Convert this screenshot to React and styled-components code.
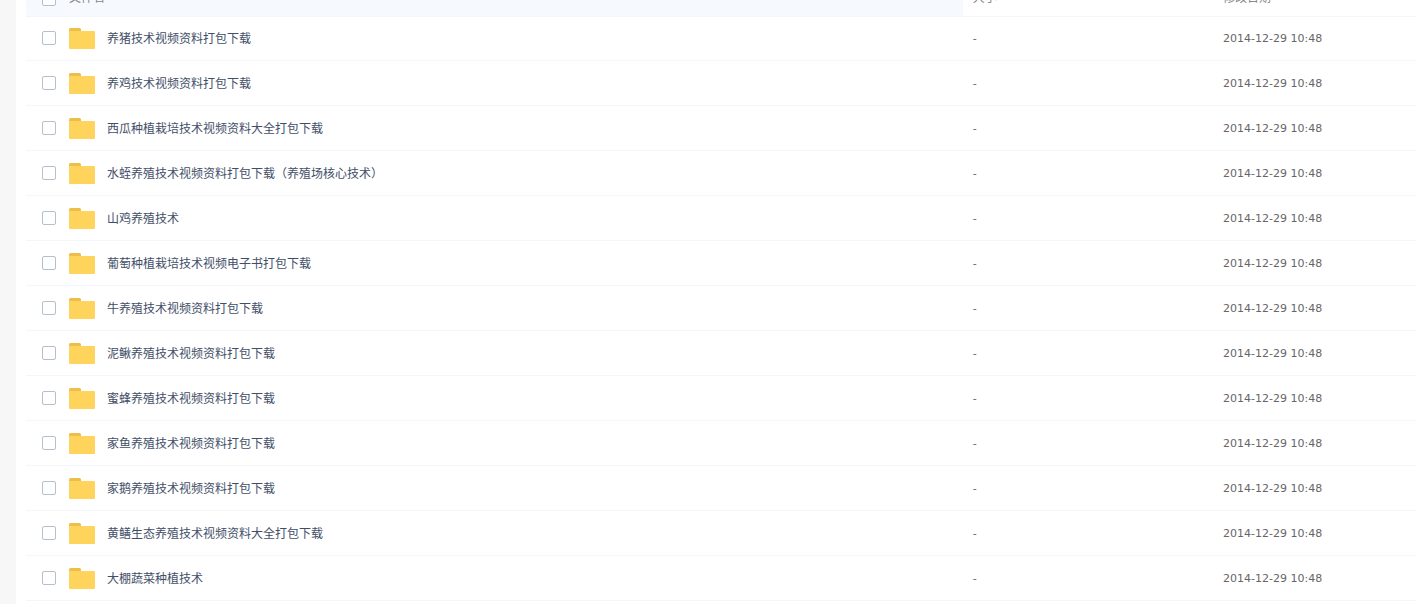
import React from "react";
import styled, { createGlobalStyle } from "styled-components";

const GlobalStyle = createGlobalStyle`
  * {
    box-sizing: border-box;
  }
  body {
    margin: 0;
    overflow: hidden;
    background: #f7f7f7;
    font-family: "Noto Sans CJK SC", sans-serif;
    font-size: 12px;
  }
`;

const Page = styled.main`
  min-height: 100vh;
  margin-left: 16px;
  padding-left: 10px;
  overflow: hidden;
  background: #fff;
`;

// the list is scrolled a little, so the head is partly out of view
const FileTable = styled.table`
  width: 100%;
  margin-top: -18px;
  table-layout: fixed;
  border-collapse: separate;
  border-spacing: 0;
`;

const Col = styled.col`
  width: ${({ $width }) => $width};
`;

const HeadCell = styled.th`
  height: 34px;
  padding: 0 10px;
  text-align: left;
  font-weight: 400;
  line-height: 18px;
  color: #888;
  background: ${({ $active }) => ($active ? "#f6f9fe" : "#fff")};
  border-radius: 0 0 0 ${({ $active }) => ($active ? "3px" : "0")};
`;

const HeadText = styled.span`
  display: block;
  padding-bottom: 4px;
`;

const Row = styled.tr`
  &:first-child td {
    box-shadow: inset 0 1px 0 #f2f5fb;
  }
`;

const Cell = styled.td`
  height: 45px;
  padding: 0 10px;
  border-bottom: 1px solid #f2f6fd;
`;

const MetaCell = styled(Cell)`
  padding-top: 2px;
  font-family: "DejaVu Sans", sans-serif;
  font-size: 11px;
  line-height: 18px;
  color: #666;
`;

const NameBox = styled.div`
  display: flex;
  align-items: center;
  padding-left: 6px;
`;

const Check = styled.input`
  appearance: none;
  flex: none;
  width: 14px;
  height: 14px;
  margin: 0 13px 0 0;
  border: 1px solid #b4c0cc;
  border-radius: 2px;
  background: #fff;
  &:checked {
    background: #3b8cff;
  }
`;

const FileName = styled.label`
  display: flex;
  align-items: center;
  gap: 12px;
  line-height: 18px;
  color: #424e67;
  white-space: nowrap;
`;

const FolderIcon = () => (
  <svg width="26" height="21" viewBox="0 0 26 21" aria-hidden="true">
    <path d="M0 5V1.5Q0 0 1.5 0H10.5Q12 0 12 1.5V5Z" fill="#edbe4a" />
    <path d="M0 3H25Q26 3 26 4V20Q26 21 25 21H1Q0 21 0 20Z" fill="#ffd45c" />
  </svg>
);

const files = [
  "养猪技术视频资料打包下载",
  "养鸡技术视频资料打包下载",
  "西瓜种植栽培技术视频资料大全打包下载",
  "水蛭养殖技术视频资料打包下载（养殖场核心技术）",
  "山鸡养殖技术",
  "葡萄种植栽培技术视频电子书打包下载",
  "牛养殖技术视频资料打包下载",
  "泥鳅养殖技术视频资料打包下载",
  "蜜蜂养殖技术视频资料打包下载",
  "家鱼养殖技术视频资料打包下载",
  "家鹅养殖技术视频资料打包下载",
  "黄鳝生态养殖技术视频资料大全打包下载",
  "大棚蔬菜种植技术",
];

const App = () => {
  return (
    <>
      <GlobalStyle />
      <Page>
        <FileTable lang="zh-CN">
          <colgroup>
            <Col $width="67.4%" />
            <Col $width="18%" />
            <Col $width="14.6%" />
          </colgroup>
          <thead>
            <tr>
              <HeadCell $active>
                <NameBox>
                  <Check type="checkbox" id="all" />
                  <HeadText as="label" htmlFor="all">
                    文件名
                  </HeadText>
                </NameBox>
              </HeadCell>
              <HeadCell>
                <HeadText>大小</HeadText>
              </HeadCell>
              <HeadCell>
                <HeadText>修改日期</HeadText>
              </HeadCell>
            </tr>
          </thead>
          <tbody>
            {files.map((name, i) => (
              <Row key={name}>
                <Cell>
                  <NameBox>
                    <Check type="checkbox" id={`file-${i}`} />
                    <FileName htmlFor={`file-${i}`}>
                      <FolderIcon />
                      {name}
                    </FileName>
                  </NameBox>
                </Cell>
                <MetaCell>-</MetaCell>
                <MetaCell>2014-12-29 10:48</MetaCell>
              </Row>
            ))}
          </tbody>
        </FileTable>
      </Page>
    </>
  );
};

export default App;
